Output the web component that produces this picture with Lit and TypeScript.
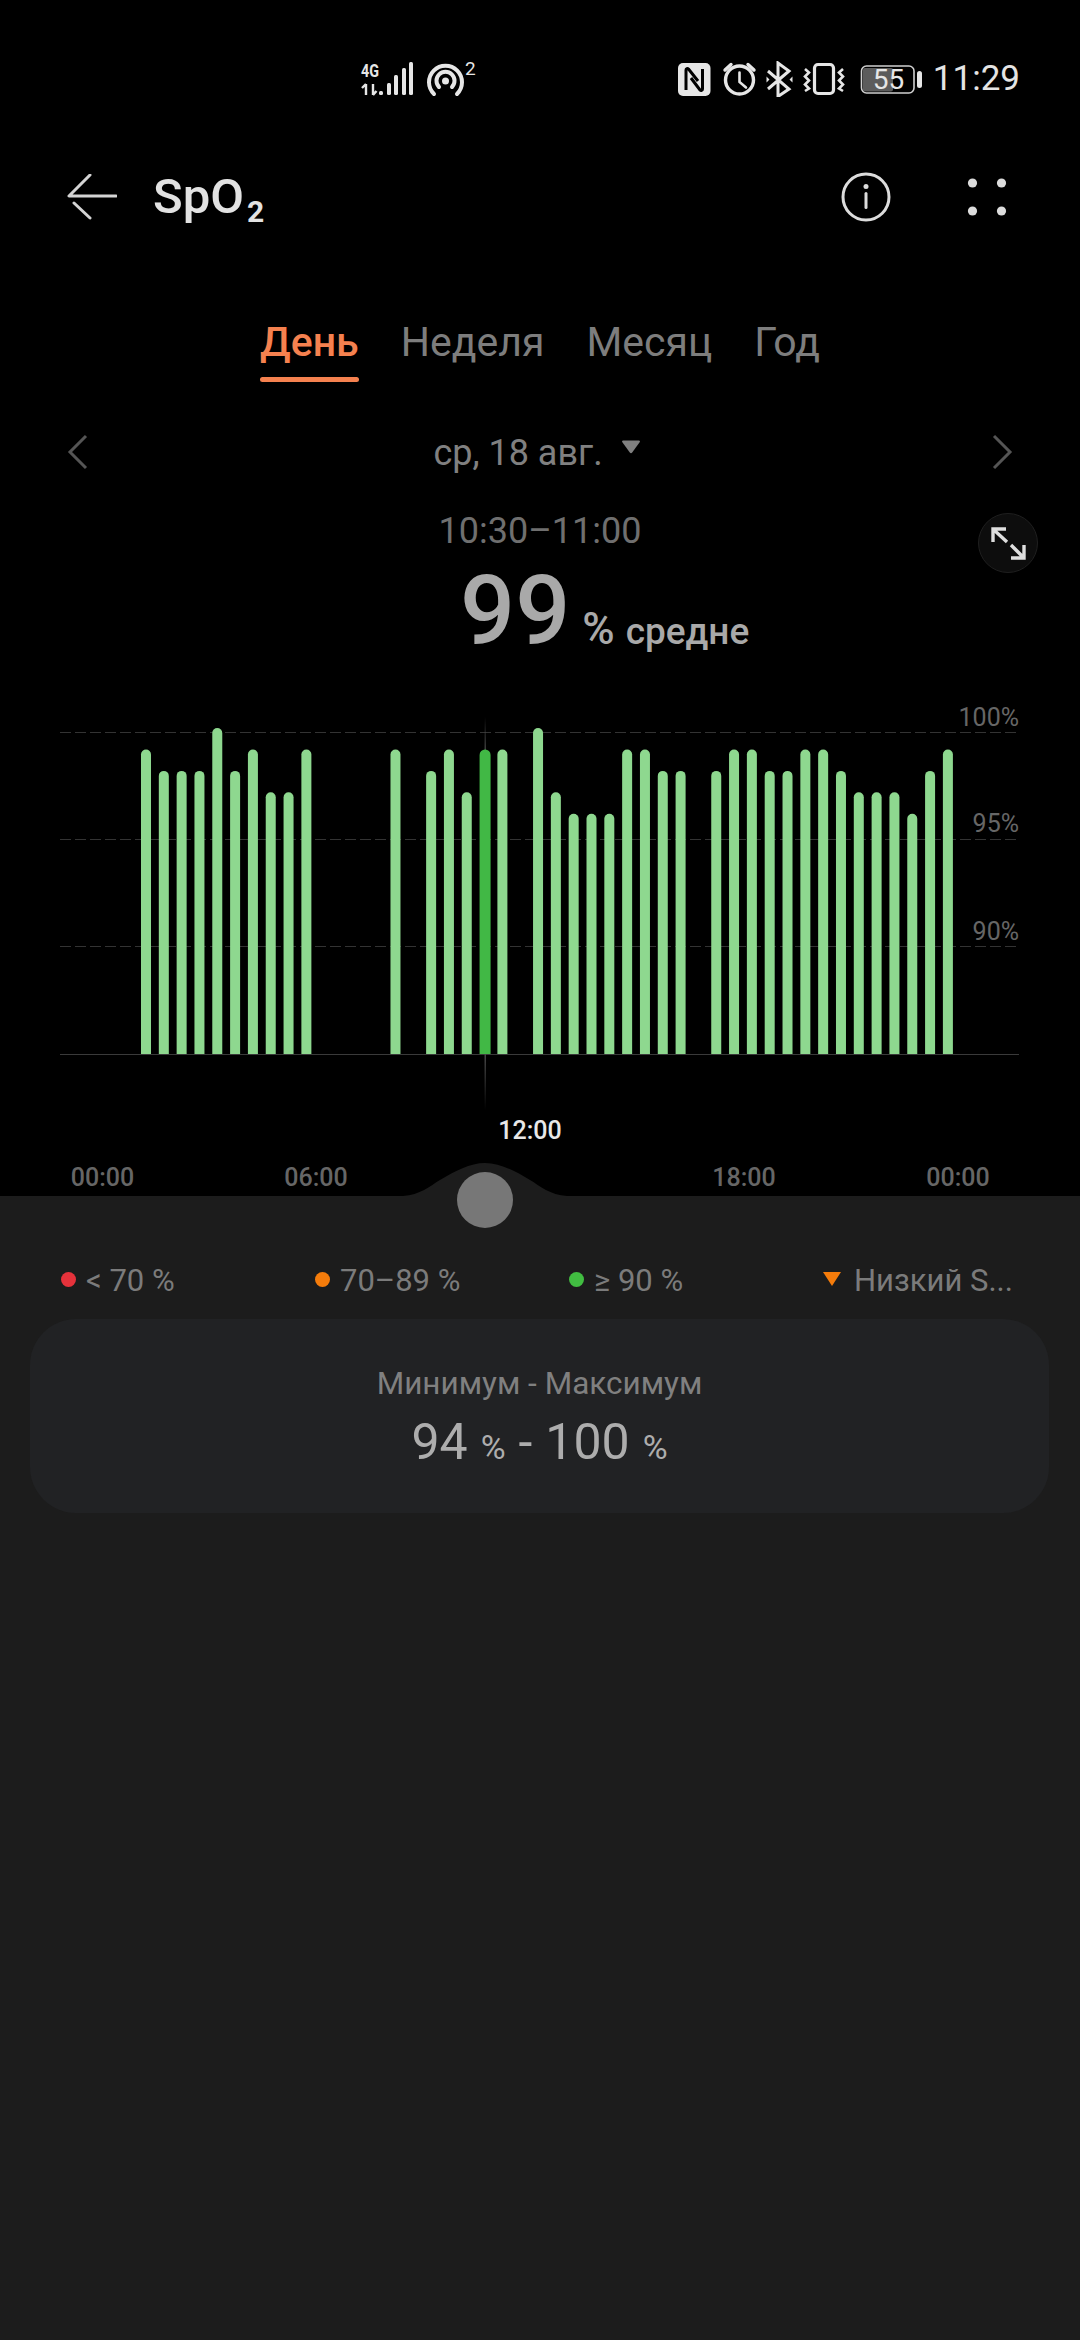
import { LitElement, html, css, svg } from "lit";
import { customElement } from "lit/decorators.js";

type Bar = [number, number];
const BARS: Bar[] = [
  [0,99],[1,98],[2,98],[3,98],[4,100],[5,98],[6,99],[7,97],[8,97],[9,99],
  [14,99],
  [16,98],[17,99],[18,97],[19,99],[20,99],
  [22,100],[23,97],[24,96],[25,96],[26,96],[27,99],[28,99],[29,98],[30,98],
  [32,98],[33,99],[34,99],[35,98],[36,98],[37,99],[38,99],[39,98],[40,97],[41,97],[42,97],[43,96],[44,98],[45,99],
];
const SELECTED = 19;
const BASE = 1054;

function barPath(i: number, v: number) {
  const x = 141 + i * 17.82;
  const sel = i === SELECTED;
  const w = sel ? 11 : 10;
  const r = w / 2;
  const top = 749.5 + (99 - v) * 21.4;
  return `M${x} ${BASE}V${top + r}A${r} ${r} 0 0 1 ${x + w} ${top + r}V${BASE}Z`;
}

@customElement("app-root")
export class AppRoot extends LitElement {
  static styles = css`
    :host { display: block; width: 1080px; height: 2340px; font-family: Roboto, "Noto Sans", sans-serif; }
    .page { width: 1080px; height: 2340px; display: flex; flex-direction: column; background: #1c1c1c; }
    .top { height: 1196px; background: #000; display: flex; flex-direction: column; position: relative; flex: none; }

    .status { height: 36px; margin-top: 61px; padding: 0 60px 0 360px; display: flex; align-items: center; justify-content: space-between; }
    .status svg { display: block; }
    .status-group { display: flex; align-items: center; }
    .clock { font-size: 35px; color: #e4e4e4; font-weight: 400; margin-left: 11px; line-height: 36px; }

    .appbar { height: 98px; margin-top: 51px; padding: 0 0 0 67px; display: flex; align-items: center; }
    .back { display: block; flex: none; }
    .title { margin: 6px 0 0 36px; font-size: 49px; font-weight: 500; color: #e2e2e2; line-height: 60px; flex: 1; }
    .title span { font-size: 30px; font-weight: 700; position: relative; top: 9px; margin-left: 3px; }
    .info { margin-right: 76px; display: block; }
    .more { margin-right: 73px; display: block; }

    .tabs { margin-top: 72px; display: flex; justify-content: center; gap: 42px; }
    .tab { font-size: 41px; line-height: 50px; color: #7d7d7d; padding-bottom: 15px; }
    .tab.on { color: #f5814f; font-weight: 500; position: relative; }
    .tab.on::after { content: ""; position: absolute; left: 0; right: 0; bottom: 0; height: 5px; border-radius: 3px; background: #f5814f; }

    .date { margin-top: 50px; height: 40px; padding: 0 67px; display: flex; align-items: center; justify-content: space-between; }
    .date-mid { display: flex; align-items: center; gap: 18px; padding-right: 6px; color: #808080; font-size: 36px; line-height: 40px; }
    .date-mid span { position: relative; top: 1px; }
    .date-mid svg { margin-top: -12px; }

    .range { margin-top: 39px; text-align: center; font-size: 36px; line-height: 40px; color: #6f6f6f; }
    .expand { position: absolute; left: 978px; top: 513px; width: 60px; height: 60px; box-sizing: border-box; border-radius: 50%; background: #0d0d0d; border: 1px solid #1f1f1f; }
    .expand svg { display: block; }

    .big { margin-top: 10px; height: 100px; padding-left: 460px; display: flex; align-items: baseline; color: #a9a9a9; line-height: 100px; font-weight: 500; }
    .big b { font-size: 97px; font-weight: 500; }
    .big i { font-style: normal; font-size: 44px; margin-left: 12px; }
    .big em { font-style: normal; font-size: 37px; margin-left: 11px; }

    .chart { flex: 1; margin-top: 39px; position: relative; }
    .chart svg { display: block; }
    .chart text { font-family: Roboto, "Noto Sans", sans-serif; }
    .pct { font-size: 25px; fill: #666; text-anchor: end; }
    .axis { font-size: 25px; fill: #666; text-anchor: middle; font-weight: 500; }
    .axis.cur { fill: #e8e8e8; }
    .thumb { position: absolute; left: 457px; bottom: -32px; width: 56px; height: 56px; border-radius: 50%; background: #777; }

    .bottom { flex: 1; }
    .legend { margin-top: 65px; padding-left: 61px; display: grid; grid-template-columns: repeat(4, 254px); font-size: 31px; line-height: 40px; color: #7b7b7b; }
    .lg { display: flex; align-items: center; white-space: nowrap; }
    .dot { width: 15px; height: 15px; border-radius: 50%; margin-right: 10px; margin-top: -4px; flex: none; }
    .red { background: #e5323b; }
    .orange { background: #f57c0b; }
    .green { background: #41bd41; }
    .lg svg { margin-right: 13px; margin-top: -4px; flex: none; }

    .card { margin: 18px 31px 0 30px; height: 194px; box-sizing: border-box; padding-top: 45px; border-radius: 46px; background: #212224; text-align: center; }
    .card-label { font-size: 31.5px; line-height: 40px; color: #808080; }
    .card-value { margin-top: 8px; display: flex; justify-content: center; align-items: baseline; gap: 13px; color: #adadad; font-size: 50px; line-height: 60px; }
    .card-value span { font-size: 34px; }
    .card-value b { font-weight: 400; }
  `;

  private statusLeft() {
    return html`<svg width="120" height="46" viewBox="360 56 120 46">
      <text x="361" y="77" font-family="Roboto" font-weight="700" font-size="18" fill="#e6e6e6" textLength="18" lengthAdjust="spacingAndGlyphs">4G</text>
      <g stroke="#e6e6e6" stroke-width="2.4" fill="none">
        <path d="M366 95V84M362 88l4-4M373 84V95M376.500 91l-3.500 4"/>
      </g>
      <rect x="379" y="91" width="4" height="4" rx="1.500" fill="#e6e6e6"/>
      <rect x="387" y="83" width="4" height="12" rx="1.500" fill="#e6e6e6"/>
      <rect x="394" y="75" width="4" height="20" rx="1.500" fill="#e6e6e6"/>
      <rect x="402" y="68" width="4" height="27" rx="1.500" fill="#e6e6e6"/>
      <rect x="409" y="62" width="4" height="33" rx="1.500" fill="#e6e6e6"/>
      <g stroke="#e6e6e6" stroke-width="4" fill="none" stroke-linecap="round">
        <path d="M434 94A16.500 16.500 0 1 1 457 94"/>
        <path d="M439 87A9 9 0 1 1 452 87"/>
      </g>
      <circle cx="445.500" cy="81" r="3.500" fill="#e6e6e6"/>
      <text x="465" y="75" font-family="Roboto" font-size="19" fill="#e6e6e6">2</text>
    </svg>`;
  }

  private statusRight() {
    return html`<svg width="244" height="36" viewBox="677 61 244 36">
      <rect x="677" y="63" width="32.500" height="33" rx="5" fill="#e6e6e6"/>
      <path d="M685 90V70C685 68.500 686.500 68 687.500 69L697 81M701.500 69V89C701.500 90.500 700 91 699 90L690 78" fill="none" stroke="#000" stroke-width="3"/>
      <g stroke="#e6e6e6" fill="none" stroke-width="3.400" stroke-linecap="round">
        <circle cx="738.500" cy="80" r="14"/>
        <path d="M738.500 72.500V82L745 87.500" stroke-width="2.600"/>
        <path d="M724 70L730 64.500M747 64.500L753 70"/>
      </g>
      <g stroke="#e6e6e6" fill="none" stroke-width="3" stroke-linejoin="miter">
        <path d="M767 71L788 89L777 96.500V63L788 71L767 89"/>
      </g>
      <path d="M765.500 76.500V82.500L768.500 79.500ZM791.500 76.500V82.500L788.500 79.500Z" fill="#e6e6e6"/>
      <rect x="813.500" y="64.500" width="19" height="29" rx="3.500" fill="none" stroke="#e6e6e6" stroke-width="3.200"/>
      <g stroke="#e6e6e6" fill="none" stroke-width="2.600">
        <path d="M804 69L808 72.500L804 76.500L808 80.500L804 84.500L808 88.500L804 91"/>
        <path d="M842 69L838 72.500L842 76.500L838 80.500L842 84.500L838 88.500L842 91"/>
      </g>
      <rect x="862" y="68" width="30" height="23.500" rx="2" fill="#5c5c5c"/>
      <rect x="860.500" y="66" width="52.500" height="27" rx="5" fill="none" stroke="#cfcfcf" stroke-width="1.600"/>
      <text x="887.500" y="89" text-anchor="middle" font-family="Roboto" font-size="28" fill="#e6e6e6">55</text>
      <rect x="916" y="71" width="5" height="17" rx="2.500" fill="#e6e6e6"/>
    </svg>`;
  }

  private chart() {
    const labels: [number, string][] = [[102.5, "00:00"], [316, "06:00"], [744, "18:00"], [958, "00:00"]];
    return html`<svg width="1080" height="496" viewBox="0 700 1080 496">
      <defs>
        <linearGradient id="cursor" x1="0" y1="0" x2="0" y2="1">
          <stop offset="0" stop-color="#4a4a4a" stop-opacity="0"/>
          <stop offset="0.1" stop-color="#4a4a4a"/>
          <stop offset="0.85" stop-color="#4a4a4a"/>
          <stop offset="1" stop-color="#4a4a4a" stop-opacity="0"/>
        </linearGradient>
      </defs>
      ${[732, 839, 946].map(
        (y) => svg`<line x1="60" x2="1019" y1=${y + 0.5} y2=${y + 0.5} stroke="#333" stroke-width="1" stroke-dasharray="11 4"/>`
      )}
      <line x1="60" x2="1019" y1="1054.500" y2="1054.500" stroke="#3a3a3a" stroke-width="1"/>
      <rect x="484.500" y="717" width="1.500" height="393" fill="url(#cursor)"/>
      ${BARS.map(
        ([i, v]) => svg`<path d=${barPath(i, v)} fill=${i === SELECTED ? "#41b845" : "#8ed88f"}/>`
      )}
      <text class="pct" x="1019" y="726">100%</text>
      <text class="pct" x="1019" y="832">95%</text>
      <text class="pct" x="1019" y="940">90%</text>
      ${labels.map(([x, t]) => svg`<text class="axis" x=${x} y="1186">${t}</text>`)}
      <text class="axis cur" x="530" y="1139">12:00</text>
      <path d="M403 1196C420 1195 430 1186 440 1180C455 1171 470 1163 485 1163C500 1163 515 1171 530 1180C540 1186 550 1195 567 1196Z" fill="#1c1c1c"/>
    </svg>`;
  }

  render() {
    return html`<div class="page">
      <div class="top">
        <div class="status">
          <div class="status-group">${this.statusLeft()}</div>
          <div class="status-group">${this.statusRight()}<span class="clock">11:29</span></div>
        </div>
        <div class="appbar">
          <svg class="back" width="50" height="46" viewBox="67 175 50 46">
            <path d="M90 176L69 197H116M74 204L90 219" fill="none" stroke="#d4d4d4" stroke-width="3" stroke-linecap="round" stroke-linejoin="round"/>
          </svg>
          <div class="title">SpO<span>2</span></div>
          <svg class="info" width="50" height="50" viewBox="0 0 50 50">
            <circle cx="25" cy="25" r="23" fill="none" stroke="#dcdcdc" stroke-width="3"/>
            <circle cx="25" cy="14.500" r="2.500" fill="#dcdcdc"/>
            <rect x="23.500" y="20" width="3" height="17" rx="1.500" fill="#dcdcdc"/>
          </svg>
          <svg class="more" width="40" height="40" viewBox="0 0 40 40">
            <circle cx="5.500" cy="6" r="4.600" fill="#dcdcdc"/>
            <circle cx="34.500" cy="6" r="4.600" fill="#dcdcdc"/>
            <circle cx="5.500" cy="34" r="4.600" fill="#dcdcdc"/>
            <circle cx="34.500" cy="34" r="4.600" fill="#dcdcdc"/>
          </svg>
        </div>
        <div class="tabs">
          <div class="tab on">День</div>
          <div class="tab">Неделя</div>
          <div class="tab">Месяц</div>
          <div class="tab">Год</div>
        </div>
        <div class="date">
          <svg width="21" height="36" viewBox="0 0 21 36"><path d="M19 2L3 18L19 34" fill="none" stroke="#555" stroke-width="3"/></svg>
          <div class="date-mid">
            <span>ср, 18 авг.</span>
            <svg width="20" height="15" viewBox="0 0 20 15"><path d="M2 1.500H18Q19.500 1.500 18.800 3L11.200 13.500Q10 15 8.800 13.500L1.200 3Q.5 1.500 2 1.500Z" fill="#808080"/></svg>
          </div>
          <svg width="21" height="36" viewBox="0 0 21 36"><path d="M2 2L18 18L2 34" fill="none" stroke="#555" stroke-width="3"/></svg>
        </div>
        <div class="range">10:30–11:00</div>
        <div class="big"><b>99</b><i>%</i><em>средне</em></div>
        <div class="expand">
          <svg width="58" height="58" viewBox="979 514 58 58">
            <path d="M993 542V529H1006M994 530L1007 542M1011 558H1024V545M1023 557L1011 545" fill="none" stroke="#dedede" stroke-width="3.400"/>
          </svg>
        </div>
        <div class="chart">
          ${this.chart()}
          <div class="thumb"></div>
        </div>
      </div>
      <div class="bottom">
        <div class="legend">
          <div class="lg"><span class="dot red"></span>&lt; 70 %</div>
          <div class="lg"><span class="dot orange"></span>70–89 %</div>
          <div class="lg"><span class="dot green"></span>≥ 90 %</div>
          <div class="lg"><svg width="18" height="14" viewBox="0 0 18 14"><path d="M0 0H18L9 14Z" fill="#f57c0b"/></svg>Низкий S...</div>
        </div>
        <div class="card">
          <div class="card-label">Минимум - Максимум</div>
          <div class="card-value">94<span>%</span>-<b>100</b><span>%</span></div>
        </div>
      </div>
    </div>`;
  }
}
